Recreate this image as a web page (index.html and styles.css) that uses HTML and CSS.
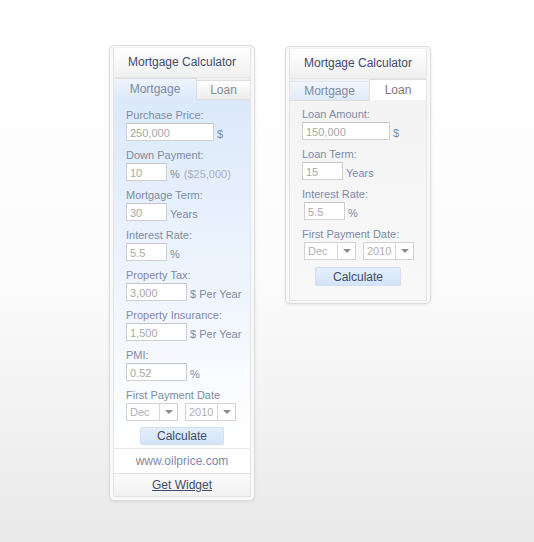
FILE: index.html
```html
<!DOCTYPE html>
<html>
<head>
  <title>Mortgage Calculator Widgets</title>
  <link rel="stylesheet" href="styles.css">
</head>
<body>

  <div class="stage">

    <div class="widget">
      <div class="inner">
        <div class="title">Mortgage Calculator</div>
        <div class="tabs">
          <div class="tab tab-wide active">Mortgage</div>
          <div class="tab tab-narrow">Loan</div>
        </div>
        <div class="content mortgage">
          <div class="field">
            <label>Purchase Price:</label>
            <div class="line"><input class="w-lg" type="text" value="250,000" /><span class="unit">$</span></div>
          </div>
          <div class="field">
            <label>Down Payment:</label>
            <div class="line"><input class="w-sm" type="text" value="10" /><span class="unit">%</span><span class="note">($25,000)</span></div>
          </div>
          <div class="field">
            <label>Mortgage Term:</label>
            <div class="line"><input class="w-sm" type="text" value="30" /><span class="unit">Years</span></div>
          </div>
          <div class="field">
            <label>Interest Rate:</label>
            <div class="line"><input class="w-sm" type="text" value="5.5" /><span class="unit">%</span></div>
          </div>
          <div class="field">
            <label>Property Tax:</label>
            <div class="line"><input class="w-md" type="text" value="3,000" /><span class="unit">$ Per Year</span></div>
          </div>
          <div class="field">
            <label>Property Insurance:</label>
            <div class="line"><input class="w-md" type="text" value="1,500" /><span class="unit">$ Per Year</span></div>
          </div>
          <div class="field">
            <label>PMI:</label>
            <div class="line"><input class="w-md" type="text" value="0.52" /><span class="unit">%</span></div>
          </div>
          <div class="field">
            <label>First Payment Date</label>
            <div class="line selects">
              <div class="select"><span>Dec</span><i class="arrow"></i></div>
              <div class="select"><span>2010</span><i class="arrow"></i></div>
            </div>
          </div>
          <div class="actions"><button type="button">Calculate</button></div>
        </div>
        <div class="site">www.oilprice.com</div>
        <div class="get"><a href="#">Get Widget</a></div>
      </div>
    </div>

    <div class="widget small">
      <div class="inner">
        <div class="title">Mortgage Calculator</div>
        <div class="tabs">
          <div class="tab tab-wide">Mortgage</div>
          <div class="tab tab-narrow active">Loan</div>
        </div>
        <div class="content loan">
          <div class="field">
            <label>Loan Amount:</label>
            <div class="line"><input class="w-lg" type="text" value="150,000" /><span class="unit">$</span></div>
          </div>
          <div class="field">
            <label>Loan Term:</label>
            <div class="line"><input class="w-sm" type="text" value="15" /><span class="unit">Years</span></div>
          </div>
          <div class="field">
            <label>Interest Rate:</label>
            <div class="line shift"><input class="w-sm" type="text" value="5.5" /><span class="unit">%</span></div>
          </div>
          <div class="field">
            <label>First Payment Date:</label>
            <div class="line selects shift">
              <div class="select"><span>Dec</span><i class="arrow"></i></div>
              <div class="select"><span>2010</span><i class="arrow"></i></div>
            </div>
          </div>
          <div class="actions"><button type="button">Calculate</button></div>
        </div>
      </div>
    </div>

  </div>

</body>
</html>
```

FILE: styles.css
```css
body {
  margin: 0;
  height: 542px;
  background: linear-gradient(#ffffff 0%, #fcfcfc 50%, #e9e9e9 100%);
  font-family: "Liberation Sans", Arial, sans-serif;
  color: #7d8ba6;
}

.stage {
  display: flex;
  align-items: flex-start;
  gap: 30px;
  padding: 45px 0 0 109px;
}

.widget {
  width: 138px;
  padding: 1px 3px 3px;
  background-color: #f9f9f9;
  border: 1px solid #dcdcdc;
  border-radius: 5px;
  box-shadow: 0 1px 3px rgba(0, 0, 0, 0.08);
}

.widget.small {
  margin-top: 1px;
  padding-bottom: 2px;
}

.inner {
  border: 1px solid #e4e4e4;
  border-top-color: #f0f0f0;
  background-color: #fff;
}

.title {
  height: 29px;
  line-height: 29px;
  text-align: center;
  font-size: 12px;
  color: #3e4d6b;
  background: linear-gradient(#ffffff, #f0f0f0);
  border-bottom: 1px solid #e6e6e6;
}

.tabs {
  display: flex;
  align-items: flex-end;
  height: 22px;
  background: linear-gradient(#f0f0f0, #f6f6f6);
}

.tab {
  box-sizing: border-box;
  height: 20px;
  line-height: 19px;
  text-align: center;
  font-size: 12px;
  color: #8a8a8a;
  background: linear-gradient(#ffffff, #ececec);
  border-top: 1px solid #dedede;
  border-bottom: 1px solid #dedede;
}

.tab.active {
  height: 22px;
  line-height: 21px;
}

.tab-wide {
  width: 83px;
}

.tab-narrow {
  flex: 1;
}

.tab-wide.active {
  color: #7d8ba6;
  background: linear-gradient(#eef4fc, #dde9f9);
  border-right: 1px solid #d8dee8;
  border-bottom-color: #dde9f9;
}

.tab-narrow.active {
  color: #7a7a7a;
  background: #ffffff;
  border-left: 1px solid #dedede;
  border-bottom-color: #f6f6f6;
}

.small .tab-wide {
  width: 79px;
  color: #7d8ba6;
  background: linear-gradient(#f1f6fd, #dfeaf9);
  border-top-color: #e2e8f0;
}

.content {
  padding: 8px 0 3px 12px;
}

.content.mortgage {
  background: linear-gradient(#dce9fa 0%, #eaf2fd 40%, #ffffff 100%);
}

.content.loan {
  padding-top: 6px;
  padding-bottom: 14px;
  background: linear-gradient(#f4f4f4, #f8f8f8);
}

.field {
  margin-bottom: 7px;
}

label {
  display: block;
  height: 14px;
  line-height: 14px;
  font-size: 11px;
  color: #7d8ba6;
  margin-bottom: 1px;
}

.line {
  display: flex;
  align-items: flex-end;
  height: 18px;
}

.line.shift {
  padding-left: 2px;
}

input {
  box-sizing: border-box;
  height: 18px;
  padding: 1px 3px 0;
  border: 1px solid #cfcfcf;
  border-top-color: #c4c4c4;
  background-color: #fff;
  color: #a8a8a8;
  font-family: "Liberation Sans", Arial, sans-serif;
  font-size: 11px;
  margin: 0;
}

.w-lg { width: 88px; }
.w-md { width: 61px; }
.w-sm { width: 41px; }

.unit {
  margin-left: 3px;
  font-size: 11px;
  line-height: 13px;
  color: #7d8ba6;
}

.note {
  margin-left: 4px;
  font-size: 11px;
  line-height: 13px;
  color: #a9b1c0;
}

.selects {
  gap: 7px;
}

.select {
  box-sizing: border-box;
  display: flex;
  width: 52px;
  height: 18px;
  border: 1px solid #d2d2d2;
  background-color: #fff;
  font-size: 11px;
  color: #b0b0b0;
}

.select + .select {
  width: 51px;
}

.select span {
  flex: 1;
  line-height: 16px;
  padding-left: 3px;
}

.select .arrow {
  width: 17px;
  border-left: 1px solid #d8d8d8;
  position: relative;
}

.select .arrow::after {
  content: "";
  position: absolute;
  left: 5px;
  top: 6px;
  border-left: 4px solid transparent;
  border-right: 4px solid transparent;
  border-top: 4px solid #8c8c8c;
}

.actions {
  display: flex;
  justify-content: center;
  padding-right: 12px;
  margin-top: -1px;
}

.loan .actions {
  margin-top: 3px;
}

button {
  width: 84px;
  height: 18px;
  padding: 0;
  border: 1px solid #d3e0f1;
  border-radius: 2px;
  background: linear-gradient(#e4eefb, #d4e4f8);
  color: #3e4d6b;
  font-family: "Liberation Sans", Arial, sans-serif;
  font-size: 12px;
  cursor: pointer;
}

.loan button {
  width: 86px;
  height: 19px;
}

.site {
  height: 24px;
  line-height: 24px;
  text-align: center;
  font-size: 12px;
  color: #7d8ba6;
  border-top: 1px solid #e8e8e8;
  border-bottom: 1px solid #e2e2e2;
}

.get {
  height: 22px;
  line-height: 22px;
  text-align: center;
  font-size: 12px;
  background: linear-gradient(#fbfbfb, #f1f1f1);
}

.get a {
  color: #3e4d6b;
}
```
